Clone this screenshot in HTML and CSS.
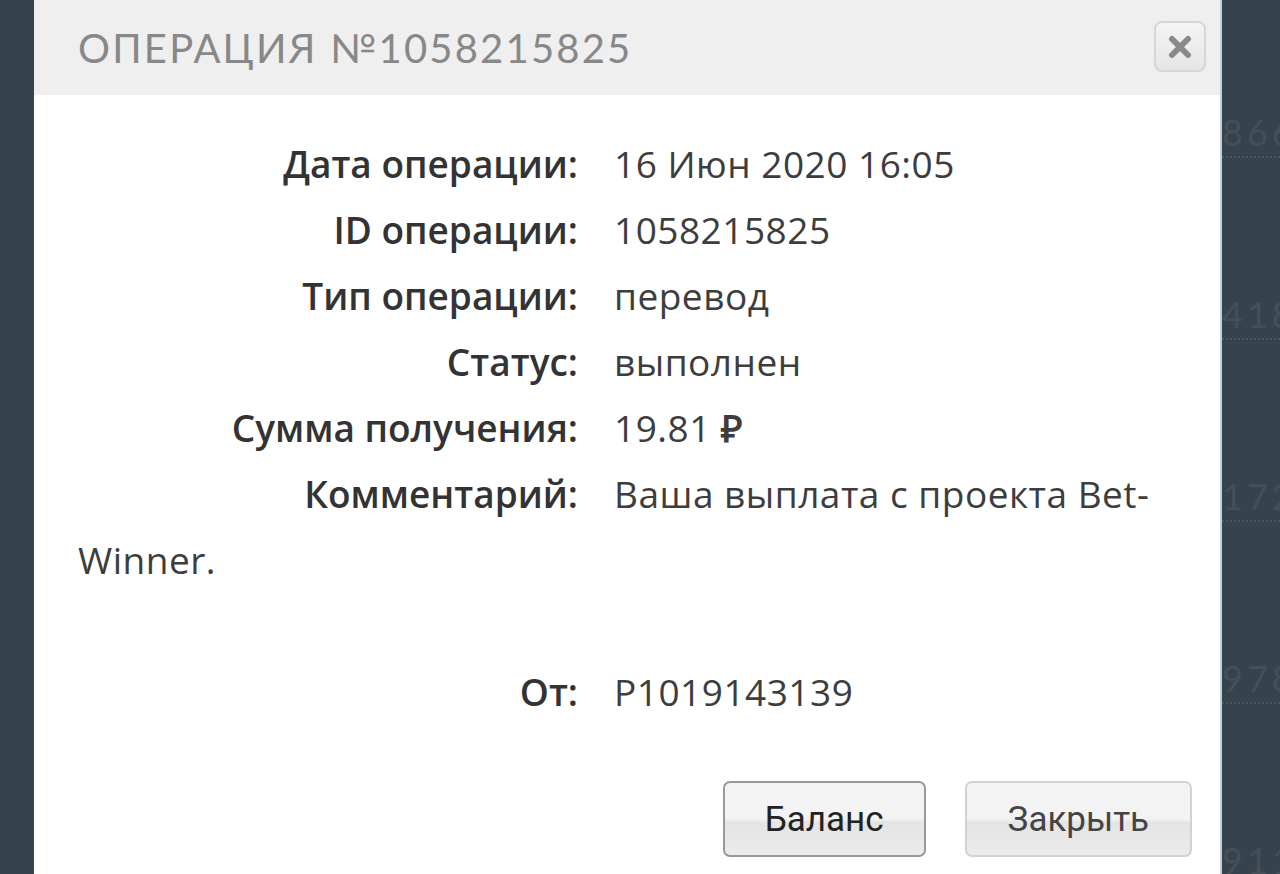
FILE: index.html
```html
<!DOCTYPE html>
<html lang="ru">
<head>
    <meta charset="UTF-8">
    <title>Операция №1058215825</title>
    <link rel="stylesheet" href="styles.css">
</head>
<body>
    <div class="modal">
        <div class="modal-head">
            <h2 class="modal-title">Операция №1058215825</h2>
            <button class="close-x">
                <svg width="24" height="24" viewBox="0 0 24 24">
                    <path d="M4 4 L20 20 M20 4 L4 20" stroke="#8a8a8a" stroke-width="6" stroke-linecap="round"/>
                </svg>
            </button>
        </div>
        <div class="modal-body">
            <div class="row"><span class="label">Дата операции:</span>16 Июн 2020 16:05</div>
            <div class="row"><span class="label">ID операции:</span>1058215825</div>
            <div class="row"><span class="label">Тип операции:</span>перевод</div>
            <div class="row"><span class="label">Статус:</span>выполнен</div>
            <div class="row"><span class="label">Сумма получения:</span>19.81 <b class="rub">&#8381;</b></div>
            <div class="row"><span class="label">Комментарий:</span>Ваша выплата с проекта Bet-Winner.<br><br></div>
            <div class="row"><span class="label">От:</span>P1019143139</div>
            <div class="buttons">
                <button class="boton boton-active">Баланс</button>
                <button class="boton">Закрыть</button>
            </div>
        </div>
    </div>
    <div class="fondo">
        <div class="fondo-row">866</div>
        <div class="fondo-row">418</div>
        <div class="fondo-row">172</div>
        <div class="fondo-row">978</div>
        <div class="fondo-row">911</div>
    </div>
</body>
</html>
```

FILE: styles.css
```css
body {
    margin: 0;
    padding: 0 0 0 34px;
    background: #36434c;
    display: flex;
    height: 874px;
    overflow: hidden;
    font-family: "Open Sans", sans-serif;
}
.modal {
    width: 1186px;
    background: white;
    border-right: 2px solid #c9cfd2;
    flex-shrink: 0;
}
.modal-head {
    height: 95px;
    background: #efefef;
    display: flex;
    align-items: center;
    justify-content: space-between;
    padding: 0 14px 0 44px;
}
.modal-title {
    margin: 0;
    font-family: Lato, sans-serif;
    font-weight: 400;
    font-size: 40px;
    letter-spacing: 2.2px;
    text-transform: uppercase;
    color: #888;
}
.close-x {
    width: 52px;
    height: 51px;
    margin-top: -2px;
    border: 2px solid #d6d6d6;
    border-radius: 8px;
    background: linear-gradient(#f4f4f4, #e6e6e6);
    padding: 0;
    display: flex;
    align-items: center;
    justify-content: center;
}
.modal-body {
    padding: 36px 28px 0 44px;
    font-size: 37px;
    line-height: 66px;
    color: #3d3d3d;
    letter-spacing: 0.5px;
}
.label {
    display: inline-block;
    width: 500px;
    margin-right: 36px;
    text-align: right;
    font-weight: 600;
    color: #333;
    letter-spacing: 0;
}
.rub {
    font-weight: 700;
}
.buttons {
    display: flex;
    justify-content: flex-end;
    gap: 39px;
    margin-top: 56px;
}
.boton {
    height: 76px;
    padding: 0 41px;
    font-family: Roboto, sans-serif;
    font-size: 35px;
    letter-spacing: 0;
    color: #444;
    border: 2px solid #d2d2d2;
    border-radius: 7px;
    background: linear-gradient(#f3f3f3 50%, #e4e4e4 55%, #ececec);
}
.boton-active {
    border-color: #999;
    color: #222;
    padding: 0 40px;
}
.fondo {
    flex: 1;
    padding-top: 110px;
    overflow: hidden;
}
.fondo-row {
    height: 182px;
    font-family: Lato, sans-serif;
    font-size: 36px;
    letter-spacing: 4px;
    color: #444f58;
    white-space: nowrap;
}
.fondo-row::after {
    content: "";
    display: block;
    margin-top: 2px;
    border-top: 2px dotted #4a565e;
}
```
